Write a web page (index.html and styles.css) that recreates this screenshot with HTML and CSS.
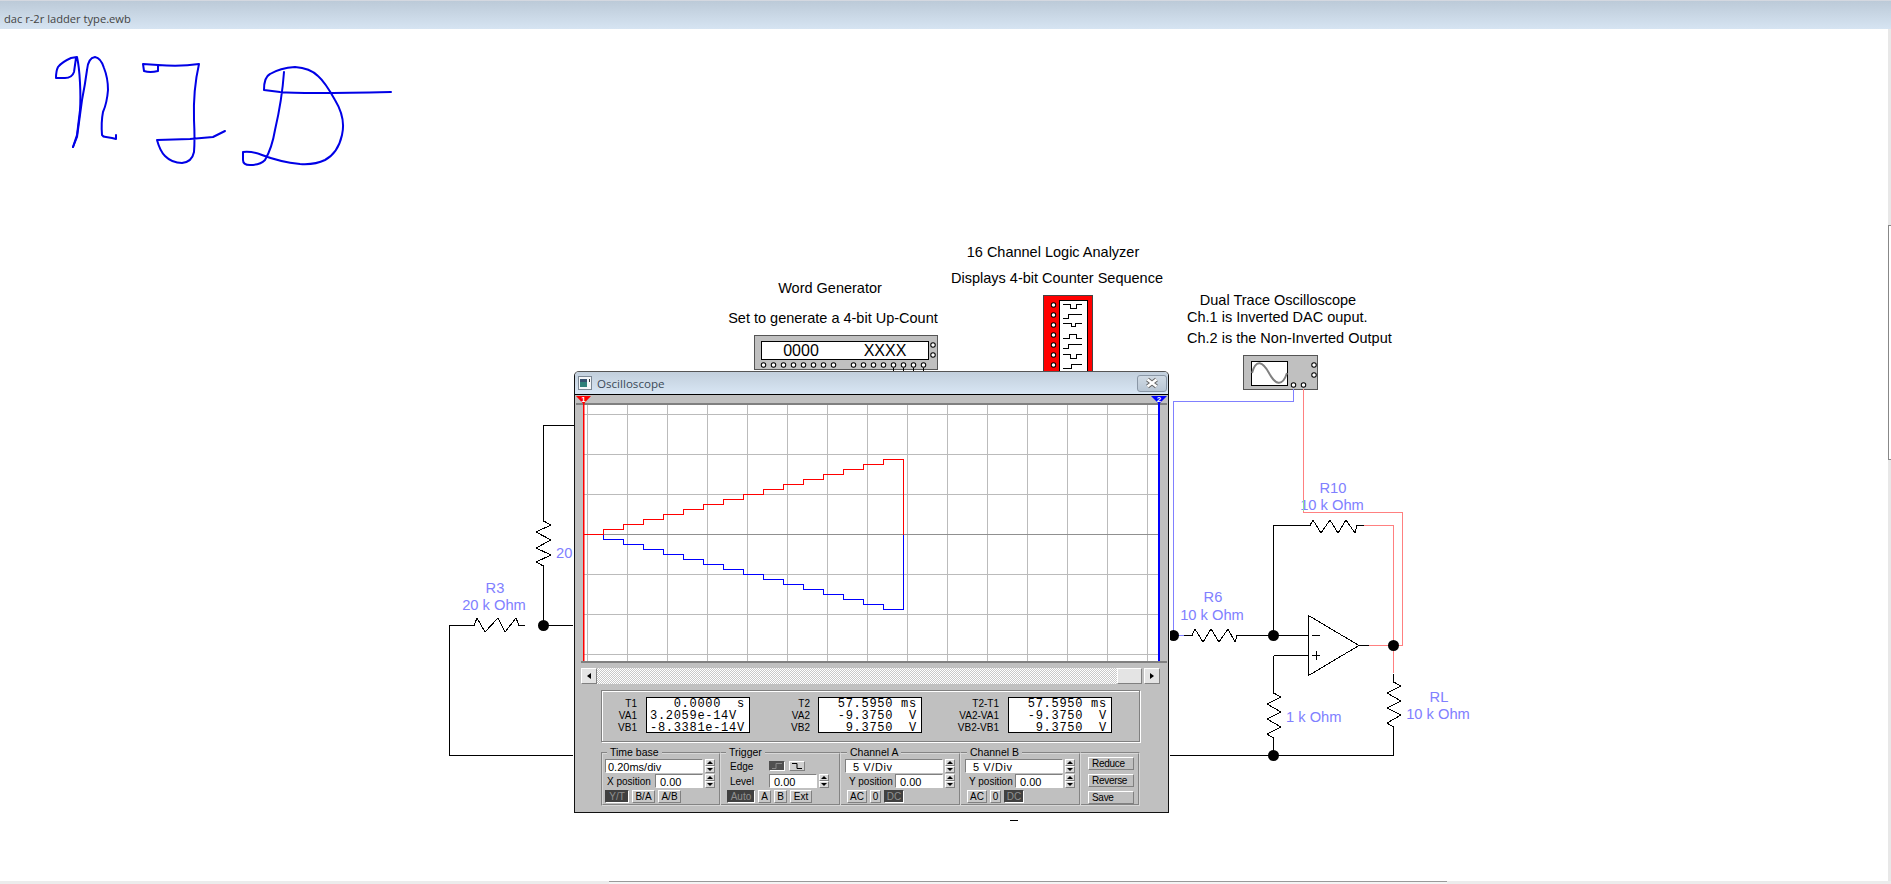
FILE: index.html
```html
<!DOCTYPE html>
<html lang="en">
<head>
    <meta charset="UTF-8">
    <meta name="viewport" content="width=device-width, initial-scale=1.0">
    <title>dac r-2r ladder type.ewb</title>
    <link rel="stylesheet" href="styles.css">
</head>
<body>
    <div class="titlebar">dac r-2r ladder type.ewb</div>
    <div class="workspace">
        <svg class="schematic" viewBox="0 29 1891 855" width="1891" height="855">
            <!-- handwriting -->
            <g class="ink">
                <path d="M73 147L77 135L80 110C81 95 80 70 77 57L71 58Q62 62 58 67Q56 71 56 78L65 78Q72 78 74 72Q75 65 76 58"/>
                <path d="M73 147L77 137Q80 115 82 100Q85 85 87 70Q88 58 95 57Q101 58 104 68Q108 78 108 90Q107 103 103 112Q101 122 102 135Q103 137 106 137L112 138L116 139V135"/>
                <path d="M158 65L143 64L144 71Q150 73 158 71V65Q180 67 199 64Q193 90 194 120Q195 140 194 152Q192 162 182 163Q172 163 165 156Q160 151 157 140L190 139L213 137L225 131"/>
                <path d="M284 72Q282 100 275 130Q272 148 265 160Q260 165 250 165Q243 165 243 160V152Q252 151 262 155Q280 162 300 164Q315 165 325 160Q338 153 342 135Q346 118 335 100Q325 82 318 76Q310 68 295 67Q280 68 270 74Q264 77 264 90Q272 91 280 92Q300 94 391 92"/>
            </g>

            <!-- labels -->
            <g class="note">
                <text x="1053" y="257">16 Channel Logic Analyzer</text>
                <text x="1057" y="283">Displays 4-bit Counter Sequence</text>
                <text x="830" y="293">Word Generator</text>
                <text x="833" y="323">Set to generate a 4-bit Up-Count</text>
                <text x="1278" y="305">Dual Trace Oscilloscope</text>
                <text class="left" x="1187" y="322">Ch.1 is Inverted DAC ouput.</text>
                <text class="left" x="1187" y="343">Ch.2 is the Non-Inverted Output</text>
            </g>
            <g class="part">
                <text x="495" y="593">R3</text>
                <text x="494" y="610">20 k Ohm</text>
                <text class="left" x="556" y="558">20</text>
                <text x="1333" y="493">R10</text>
                <text x="1332" y="510">10 k Ohm</text>
                <text x="1213" y="602">R6</text>
                <text x="1212" y="620">10 k Ohm</text>
                <text class="left" x="1286" y="722">1 k Ohm</text>
                <text x="1439" y="702">RL</text>
                <text x="1438" y="719">10 k Ohm</text>
            </g>

            <!-- word generator -->
            <rect class="case" x="754.5" y="335.5" width="183" height="34"/>
            <rect class="screen" x="761.5" y="341.5" width="167" height="18"/>
            <text class="readout" x="801" y="356">0000</text>
            <text class="readout" x="885" y="356">XXXX</text>
            <path class="pin-out" d="M763.5 365H834M853.5 365H924M933 345V356"/>
            <path class="pin-in" d="M763.5 365H834M853.5 365H924M933 345V356"/>
            <path class="wire" d="M893.5 368V372M903.5 368V372M913.5 368V372M923.5 368V372"/>

            <!-- logic analyzer -->
            <rect class="analyzer" x="1043.5" y="295.5" width="49" height="80"/>
            <rect class="screen" x="1059.5" y="300.5" width="28" height="75"/>
            <path class="pin-out" d="M1053.5 305V366"/>
            <path class="pin-in" d="M1053.5 305V366"/>
            <path class="wire" d="M1063 304H1070V308H1076V304H1082M1063 318H1068V314H1082M1063 323H1071V326H1075V323H1082M1063 338H1069V334H1076V338H1082M1063 348H1068V344H1082M1063 354H1070V358H1076V354H1082M1063 368H1071V364H1082"/>

            <!-- oscilloscope icon -->
            <rect class="case" x="1243.5" y="355.5" width="74" height="34"/>
            <rect class="screen" x="1251.5" y="361.5" width="36" height="24"/>
            <path class="sine" d="M1252 373C1256 358 1263 362 1269 373S1282 388 1287 373"/>
            <path class="pin-out" d="M1314 365V376M1293.5 385H1304"/>
            <path class="pin-in" d="M1314 365V376M1293.5 385H1304"/>

            <!-- probes -->
            <path class="wire-blue" d="M1293.5 389V401.5H1173.5V635M1173 635H1184"/>
            <path class="wire-red" d="M1303.5 389V512.5H1402.5V645.5H1369M1364 525.5H1393.5V640"/>
            <path class="wire-green" d="M1303.5 500V511"/>

            <!-- circuit -->
            <path class="wire" d="M574 425.5H543.5V521L551 525L536 532L551 540L536 548L551 555L536 562L543.5 566V625.5M543.5 625.5H573M525 625.5H519L516 618L505 632L498 618L485 632L477 618L474 625.5H449.5V755.5H573"/>
            <path class="wire" d="M1184 635.5H1192L1195 629L1203 642L1211 629L1219 642L1228 629L1235 642L1237 635.5H1273.5M1273.5 635.5V525.5H1310L1313 520L1321 533L1330 520L1338 533L1346 520L1355 533L1357 525.5H1364"/>
            <path class="wire" d="M1273.5 635.5H1308M1273.5 655.5H1308M1273.5 655.5V693L1281 697L1267 704L1281 712L1267 719L1281 727L1267 734L1273.5 738V755.5M1169 755.5H1393.5V727L1387 723L1401 715L1387 708L1401 701L1387 693L1401 686L1393.5 682V673.5"/>
            <path class="wire-red" d="M1369 645.5H1393.5V673"/>
            <path class="wire" d="M1308.5 615.5V675.5L1359 645.5L1308.5 615.5M1359 645.5H1369M1312 635.5H1320M1312 655.5H1320M1316 651V660M1010 820.5H1018"/>
            <g class="node">
                <circle cx="543.5" cy="625.5" r="5.5"/>
                <circle cx="1173.5" cy="635.5" r="5.5"/>
                <circle cx="1273.5" cy="635.5" r="5.5"/>
                <circle cx="1273.5" cy="755.5" r="5.5"/>
                <circle cx="1393.5" cy="645.5" r="5.5"/>
            </g>
        </svg>

        <div class="vscroll"><div class="vscroll-thumb"></div></div>
        <div class="hscroll"><div class="hscroll-thumb"></div></div>

        <div class="scope">
            <div class="scope-title">
                <svg class="scope-icon" viewBox="0 0 14 14" width="14" height="14">
                    <rect x="0.5" y="0.5" width="13" height="13" fill="#f4f6f8" stroke="#7b8794"/>
                    <rect x="2" y="3" width="7" height="8" fill="#2f7f78"/>
                    <rect x="2" y="3" width="7" height="3" fill="#35506e"/>
                    <rect x="11" y="3" width="1" height="3" fill="#333"/>
                </svg>
                <span class="scope-name">Oscilloscope</span>
                <div class="scope-close">
                    <svg viewBox="0 0 14 12" width="14" height="12">
                        <path d="M2.5 2.5L11.5 9.5M11.5 2.5L2.5 9.5" stroke="#666" stroke-width="4.5"/>
                        <path d="M2.5 2.5L11.5 9.5M11.5 2.5L2.5 9.5" stroke="#fff" stroke-width="2.5"/>
                    </svg>
                </div>
            </div>
            <div class="scope-body">
                <svg class="plot" viewBox="575 395 593 268" width="593" height="268">
                    <defs>
                        <pattern id="grid" x="587" y="414" width="40" height="40" patternUnits="userSpaceOnUse">
                            <path d="M.5 0V40M0 .5H40" stroke="#bbb" fill="none"/>
                        </pattern>
                    </defs>
                    <rect x="576" y="403" width="591" height="2" fill="#808080"/>
                    <rect x="581" y="661" width="586" height="2" fill="#808080"/>
                    <rect x="584" y="405" width="574" height="256" fill="#fff"/>
                    <rect x="584" y="405" width="574" height="256" fill="url(#grid)"/>
                    <rect x="584" y="534" width="574" height="1" fill="#909090"/>
                    <!-- 15 steps of 20 x 5 each -->
                    <path class="trace-blue" d="M603 534.5 v5h20 v5h20 v5h20 v5h20 v5h20 v5h20 v5h20 v5h20 v5h20 v5h20 v5h20 v5h20 v5h20 v5h20 v5h20 V534.5"/>
                    <path class="trace-red" d="M584 534.5 H603 v-5h20 v-5h20 v-5h20 v-5h20 v-5h20 v-5h20 v-5h20 v-5h20 v-5h20 v-5h20 v-5h20 v-5h20 v-5h20 v-5h20 v-5h20 V534.5"/>
                    <rect x="583" y="396" width="1.5" height="265" fill="#f00"/>
                    <rect x="1158" y="396" width="2" height="265" fill="#00f"/>
                    <polygon points="576,396 591,396 583.5,404" fill="#f00"/>
                    <polygon points="1151,396 1167,396 1159,404" fill="#00f"/>
                    <text class="marker" x="583.5" y="402">1</text>
                    <text class="marker" x="1159" y="402">2</text>
                </svg>

                <div class="hbar">
                    <div class="hbar-btn"><span class="arrow-left"></span></div>
                    <div class="hbar-track"></div>
                    <div class="hbar-thumb"></div>
                    <div class="hbar-btn"><span class="arrow-right"></span></div>
                </div>

                <div class="measure">
                    <div class="measure-group">
                        <div class="measure-labels labels-t1">T1<br>VA1<br>VB1</div>
                        <pre class="measure-box">   0.0000  s
3.2059e-14V
-8.3381e-14V</pre>
                    </div>
                    <div class="measure-group">
                        <div class="measure-labels labels-t2">T2<br>VA2<br>VB2</div>
                        <pre class="measure-box">  57.5950 ms
  -9.3750  V
   9.3750  V</pre>
                    </div>
                    <div class="measure-group">
                        <div class="measure-labels labels-dt">T2-T1<br>VA2-VA1<br>VB2-VB1</div>
                        <pre class="measure-box">  57.5950 ms
  -9.3750  V
   9.3750  V</pre>
                    </div>
                </div>

                <div class="controls">
                    <fieldset class="group group-first">
                        <legend>Time base</legend>
                        <div class="row">
                            <div class="value value-wide">0.20ms/div</div>
                            <div class="spin"><i class="up"></i><i class="down"></i></div>
                        </div>
                        <div class="row">
                            <span class="label label-x">X position</span>
                            <div class="value">0.00</div>
                            <div class="spin"><i class="up"></i><i class="down"></i></div>
                        </div>
                        <div class="row buttons">
                            <button class="btn btn-on w24">Y/T</button>
                            <button class="btn w23">B/A</button>
                            <button class="btn w23">A/B</button>
                        </div>
                    </fieldset>
                    <fieldset class="group group-trigger">
                        <legend>Trigger</legend>
                        <div class="row">
                            <span class="label label-trig">Edge</span>
                            <button class="edge edge-on">
                                <svg viewBox="0 0 12 8" width="12" height="8"><path d="M1 6.5H5V1.5H11" stroke="#888" fill="none"/></svg>
                            </button>
                            <button class="edge">
                                <svg viewBox="0 0 12 8" width="12" height="8"><path d="M1 1.5H6V6.5H11" stroke="#000" fill="none"/></svg>
                            </button>
                        </div>
                        <div class="row">
                            <span class="label label-trig">Level</span>
                            <div class="value">0.00</div>
                            <div class="spin"><i class="up"></i><i class="down"></i></div>
                        </div>
                        <div class="row buttons">
                            <button class="btn btn-on w28">Auto</button>
                            <button class="btn w13">A</button>
                            <button class="btn w13">B</button>
                            <button class="btn w22">Ext</button>
                        </div>
                    </fieldset>
                    <fieldset class="group">
                        <legend>Channel A</legend>
                        <div class="row">
                            <div class="value value-wide value-volts">5 V/Div</div>
                            <div class="spin"><i class="up"></i><i class="down"></i></div>
                        </div>
                        <div class="row">
                            <span class="label label-y">Y position</span>
                            <div class="value">0.00</div>
                            <div class="spin"><i class="up"></i><i class="down"></i></div>
                        </div>
                        <div class="row buttons buttons-ch">
                            <button class="btn w20">AC</button>
                            <button class="btn w11">0</button>
                            <button class="btn btn-on w20">DC</button>
                        </div>
                    </fieldset>
                    <fieldset class="group">
                        <legend>Channel B</legend>
                        <div class="row">
                            <div class="value value-wide value-volts">5 V/Div</div>
                            <div class="spin"><i class="up"></i><i class="down"></i></div>
                        </div>
                        <div class="row">
                            <span class="label label-y">Y position</span>
                            <div class="value">0.00</div>
                            <div class="spin"><i class="up"></i><i class="down"></i></div>
                        </div>
                        <div class="row buttons buttons-ch">
                            <button class="btn w20">AC</button>
                            <button class="btn w11">0</button>
                            <button class="btn btn-on w20">DC</button>
                        </div>
                    </fieldset>
                    <div class="group group-actions">
                        <button class="btn action">Reduce</button>
                        <button class="btn action">Reverse</button>
                        <button class="btn action">Save</button>
                    </div>
                </div>
            </div>
        </div>
    </div>
</body>
</html>
```

FILE: styles.css
```css
body {
    margin: 0;
    background-color: #ffffff;
    font-family: "Liberation Sans", Arial, sans-serif;
    overflow: hidden;
}
.titlebar {
    height: 29px;
    box-sizing: border-box;
    padding: 10px 0 0 4px;
    font-family: "Open Sans", sans-serif;
    font-size: 11.15px;
    line-height: 16px;
    color: #444444;
    background: linear-gradient(#bccad8, #d6e4f2);
    border-top: 1px solid #d4d8e0;
}
.workspace {
    position: relative;
    height: 855px;
    overflow: hidden;
}
.schematic {
    display: block;
}

/* drawing */
.ink path {
    fill: none;
    stroke: #0000e6;
    stroke-width: 2;
    stroke-linejoin: round;
    stroke-linecap: round;
}
.note text, .part text {
    text-anchor: middle;
}
.note text {
    font-size: 14.5px;
}
.part text {
    font-size: 14.7px;
    fill: #8080ff;
}
.note text.left, .part text.left {
    text-anchor: start;
}
.case {
    fill: #c0c0c0;
    stroke: #555555;
}
.screen {
    fill: #ffffff;
    stroke: #000000;
}
.analyzer {
    fill: #ff0000;
    stroke: #444444;
}
.readout {
    font-size: 16px;
    text-anchor: middle;
}
.pin-out, .pin-in {
    fill: none;
    stroke-linecap: round;
    stroke-dasharray: 0 10;
}
.pin-out {
    stroke: #000000;
    stroke-width: 5.5;
}
.pin-in {
    stroke: #ffffff;
    stroke-width: 3.5;
}
.sine {
    fill: none;
    stroke: #808080;
    stroke-width: 2;
}
.wire, .wire-blue, .wire-red, .wire-green {
    fill: none;
    stroke: #000000;
    shape-rendering: crispEdges;
}
.wire-blue {
    stroke: #8080ff;
}
.wire-red {
    stroke: #ff8080;
}
.wire-green {
    stroke: #90e890;
}
.node circle {
    fill: #000000;
}

/* page scrollbars */
.vscroll {
    position: absolute;
    top: 0;
    right: 0;
    bottom: 3px;
    width: 3px;
    background-color: #e8e8e8;
}
.vscroll-thumb {
    margin-top: 196px;
    height: 233px;
    background-color: #ffffff;
    border: 1px solid #888888;
    border-right: none;
}
.hscroll {
    position: absolute;
    left: 0;
    right: 0;
    bottom: 0;
    height: 3px;
    background-color: #ececec;
}
.hscroll-thumb {
    margin-left: 609px;
    width: 838px;
    height: 2px;
    background-color: #f4f4f4;
    border-top: 1px solid #9a9a9a;
}

/* oscilloscope window */
.scope {
    position: absolute;
    left: 574px;
    top: 342px;
    width: 593px;
    height: 440px;
    border: 1px solid #111111;
    border-top-color: #555555;
    border-radius: 5px 5px 0 0;
    box-shadow: 0 1px 0 #ffffff, 1px 0 0 #ffffff;
}
.scope-title {
    display: flex;
    align-items: center;
    height: 22px;
    padding-left: 3px;
    border-bottom: 1px solid #000000;
    border-radius: 4px 4px 0 0;
    background: linear-gradient(#c2cfdc, #d8e6f4);
}
.scope-name {
    margin-left: 5px;
    font-family: "Open Sans", sans-serif;
    font-size: 11.6px;
    color: #3c4a58;
}
.scope-close {
    display: flex;
    align-items: center;
    justify-content: center;
    width: 28px;
    height: 15px;
    margin-left: auto;
    margin-right: 1px;
    border: 1px solid #8a97a6;
    border-radius: 3px;
    background: linear-gradient(#d0dae4, #b8c6d4);
}
.scope-body {
    height: 417px;
    background-color: #c0c0c0;
}
.plot {
    display: block;
}
.trace-red, .trace-blue {
    fill: none;
    stroke-width: 1;
    shape-rendering: crispEdges;
}
.trace-red {
    stroke: #ff0000;
}
.trace-blue {
    stroke: #0000ff;
}
.marker {
    font-size: 8px;
    font-weight: bold;
    fill: #ffffff;
    text-anchor: middle;
}

/* scroll row */
.hbar {
    display: flex;
    margin: 5px 0 0 6px;
    width: 579px;
    height: 16px;
}
.hbar-btn, .hbar-thumb {
    box-sizing: border-box;
    background-color: #e4e4e4;
    border: 1px solid;
    border-color: #ffffff #808080 #808080 #ffffff;
}
.hbar-btn {
    display: flex;
    align-items: center;
    justify-content: center;
    width: 16px;
}
.hbar-track {
    flex: 1;
    background: repeating-conic-gradient(#ffffff 0 25%, #c8c8c8 0 50%) 0 0 / 2px 2px;
}
.hbar-thumb {
    width: 25px;
    margin-right: 2px;
}
.arrow-left, .arrow-right {
    width: 0;
    height: 0;
    border-top: 3px solid transparent;
    border-bottom: 3px solid transparent;
}
.arrow-left {
    border-right: 4px solid #000000;
}
.arrow-right {
    border-left: 4px solid #000000;
}

/* readings */
.measure {
    display: flex;
    box-sizing: border-box;
    width: 539px;
    height: 52px;
    margin: 6px 0 0 26px;
    padding-top: 6px;
    border: 1px solid #808080;
    box-shadow: 1px 1px 0 #ffffff, inset 1px 1px 0 #ffffff;
}
.measure-group {
    display: flex;
    align-items: flex-start;
}
.measure-labels {
    font-size: 10px;
    line-height: 12px;
    text-align: right;
    margin-top: 1px;
}
.labels-t1 {
    width: 35px;
    margin-right: 9px;
}
.labels-t2 {
    width: 60px;
    margin-right: 8px;
}
.labels-dt {
    width: 77px;
    margin-right: 9px;
}
.measure-box {
    box-sizing: border-box;
    width: 104px;
    height: 36px;
    margin: 0;
    padding: 0 0 0 3px;
    border: 1px solid #000000;
    background-color: #ffffff;
    font-family: "Liberation Mono", monospace;
    font-size: 12px;
    line-height: 12px;
    letter-spacing: 0.7px;
}

/* control groups */
.controls {
    display: grid;
    grid-template-columns: 120px 120px 120px 120px 59px;
    margin: 4px 0 0 26px;
    height: 60px;
}
.group {
    box-sizing: border-box;
    min-width: 0;
    height: 60px;
    margin: 0;
    padding: 0 0 0 4px;
    border: 2px groove #d8d8d8;
    border-left: none;
    font-size: 10px;
}
.group-first {
    padding-left: 2px;
    border-left: 2px groove #d8d8d8;
}
.group-trigger {
    padding-left: 6px;
}
.group legend {
    height: 13px;
    margin-left: 2px;
    padding: 0 3px;
    font-size: 10.5px;
    line-height: 13px;
}
.group-trigger legend {
    margin-left: -1px;
}
.group-actions {
    display: flex;
    flex-direction: column;
    gap: 4px;
    height: 54px;
    margin-top: 6px;
    padding: 3px 0 0 7px;
}
.row {
    display: flex;
    align-items: center;
    height: 14px;
    margin-bottom: 1px;
}
.buttons {
    height: 13px;
    margin-top: 2px;
    gap: 3px;
}
.buttons-ch {
    margin-left: 2px;
}
.label {
    flex-shrink: 0;
}
.label-x {
    width: 48px;
    margin-left: 2px;
}
.label-y {
    width: 46px;
    margin-left: 4px;
}
.label-trig {
    width: 39px;
    margin-left: 3px;
}
.value {
    box-sizing: border-box;
    width: 48px;
    height: 14px;
    padding: 1px 0 0 4px;
    border: 1px solid;
    border-color: #808080 #ffffff #ffffff #808080;
    background-color: #ffffff;
    font-size: 11px;
    line-height: 12px;
}
.value-wide {
    width: 98px;
    padding-left: 2px;
}
.value-volts {
    padding-left: 7px;
    letter-spacing: 0.6px;
}
.spin {
    display: flex;
    flex-direction: column;
    width: 10px;
    height: 14px;
    margin-left: 2px;
    background-color: #d8d8d8;
}
.spin i {
    flex: 1;
    display: block;
    position: relative;
    border: 1px solid;
    border-color: #ffffff #808080 #808080 #ffffff;
}
.spin i::after {
    content: "";
    position: absolute;
    left: 1px;
    top: 1px;
    border-left: 3px solid transparent;
    border-right: 3px solid transparent;
}
.spin .up::after {
    border-bottom: 3px solid #000000;
}
.spin .down::after {
    border-top: 3px solid #000000;
}
.btn {
    display: block;
    box-sizing: border-box;
    height: 13px;
    margin: 0;
    padding: 0;
    border: 1px solid;
    border-color: #ffffff #808080 #808080 #ffffff;
    background-color: #c8c8c8;
    color: #000000;
    font-family: inherit;
    font-size: 10px;
    line-height: 11px;
}
.btn-on {
    background-color: #404040;
    color: #909090;
    border-color: #404040 #ffffff #ffffff #404040;
}
.w11 { width: 11px; }
.w13 { width: 13px; }
.w20 { width: 20px; }
.w22 { width: 22px; }
.w23 { width: 23px; }
.w24 { width: 24px; }
.w28 { width: 28px; }
.action {
    width: 46px;
    padding-left: 3px;
    text-align: left;
    letter-spacing: -0.3px;
    background-color: #c0c0c0;
    border-color: #ffffff #808080 #808080 #ffffff;
}
.edge {
    display: flex;
    align-items: center;
    justify-content: center;
    box-sizing: border-box;
    width: 16px;
    height: 10px;
    margin: 0 4px 0 0;
    padding: 0;
    border: 1px solid;
    border-color: #ffffff #808080 #808080 #ffffff;
    background-color: #d0d0d0;
}
.edge-on {
    background-color: #505050;
    border-color: #505050 #ffffff #ffffff #505050;
}
```
